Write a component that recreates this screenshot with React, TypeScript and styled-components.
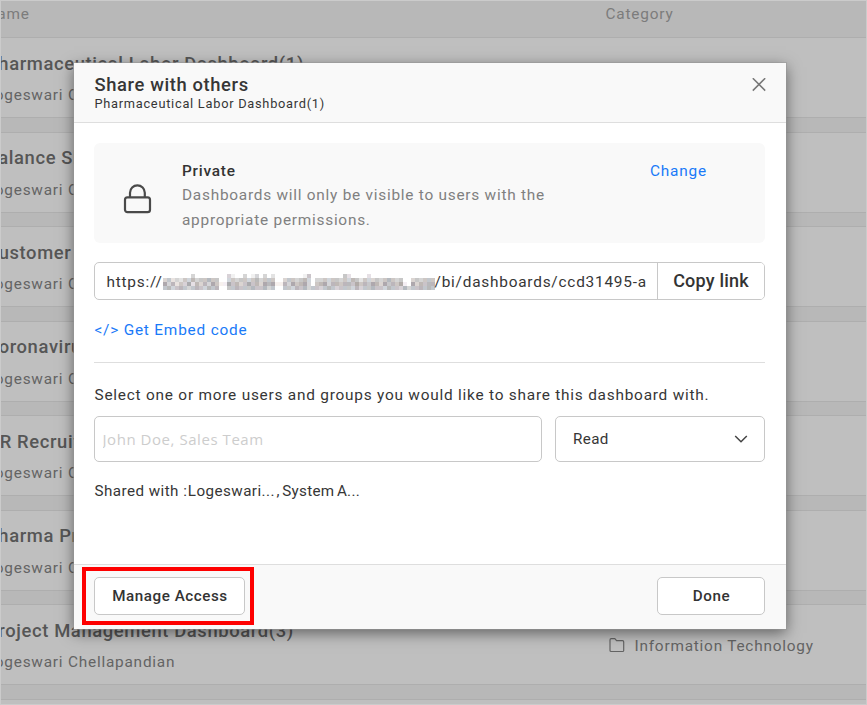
import React from 'react';
import styled, { createGlobalStyle } from 'styled-components';

const Global = createGlobalStyle`
  * { box-sizing: border-box; }
  body { margin: 0; font-family: Roboto, sans-serif; color: #363636; overflow: hidden; }
  button, input { font-family: inherit; }
`;

const Page = styled.div`
  position: relative;
  width: 867px;
  height: 705px;
  overflow: hidden;
  background: #b8b8b8;
  border: 1px solid #cbcbcb;
`;

const ListHeader = styled.div`
  display: flex;
  height: 36.4px;
  padding-top: 3px;
  font-size: 15.4px;
  line-height: 20px;
  letter-spacing: 0.8px;
  color: #7c7c7c;
`;

const NameCell = styled.div`
  width: 604.5px;
  flex: none;
  white-space: nowrap;
`;

const Clipped = styled.div<{ $shift: number }>`
  margin-left: ${(p) => -p.$shift}px;
`;

const Rows = styled.div`
  display: flex;
  flex-direction: column;
  gap: 13.5px;
`;

const Row = styled.div`
  display: flex;
  flex: none;
  height: 81px;
  border-top: 1px solid #aeaeae;
  border-bottom: 1px solid #aeaeae;
  background: #bfbfbf;
`;

const RowTitle = styled(Clipped)`
  padding-top: 13.2px;
  font-size: 18.4px;
  font-weight: 500;
  line-height: 24px;
  letter-spacing: 0.62px;
  color: #565656;
`;

const RowOwner = styled(Clipped)`
  padding-top: 9.8px;
  font-size: 15.4px;
  line-height: 20px;
  letter-spacing: 0.77px;
  color: #646464;
`;

const Category = styled.div`
  display: flex;
  align-items: center;
  gap: 9px;
  padding: 2px 0 0 3px;
  font-size: 15.4px;
  letter-spacing: 0.77px;
  color: #646464;
`;

const Dialog = styled.div`
  position: absolute;
  left: 73px;
  top: 62px;
  width: 712px;
  height: 566px;
  display: flex;
  flex-direction: column;
  background: #fff;
  box-shadow: 0 0 0 1px rgba(150, 150, 150, 0.5), 0 4px 14px rgba(0, 0, 0, 0.5);
`;

const DialogHeader = styled.header`
  display: flex;
  justify-content: space-between;
  height: 60px;
  padding: 10px 20px 0 20.4px;
  background: #f9f9f9;
  border-bottom: 1px solid #dedede;
`;

const Title = styled.h1`
  margin: 0;
  font-size: 18.4px;
  font-weight: 500;
  line-height: 23px;
  letter-spacing: 0.62px;
`;

const Subtitle = styled.div`
  font-size: 12.8px;
  line-height: 15px;
  letter-spacing: 0.74px;
`;

const CloseButton = styled.button`
  height: 14px;
  margin-top: 5px;
  padding: 0;
  border: 0;
  background: none;
  svg { display: block; }
`;

const Body = styled.div`
  flex: 1;
  padding: 20px 21px 0 20px;
`;

const AccessCard = styled.section`
  display: flex;
  height: 100px;
  padding-top: 15px;
  border-radius: 6px;
  background: #f9f9f9;
  font-size: 15.4px;
  line-height: 25px;
  letter-spacing: 0.77px;
`;

const LockSlot = styled.div`
  width: 88px;
  padding: 25px 0 0 29px;
  svg { display: block; }
`;

const AccessText = styled.div`
  width: 468px;
  color: #808080;
`;

const AccessName = styled.div`
  padding-top: 1px;
  line-height: 24px;
  font-weight: 500;
  color: #333;
`;

const Description = styled.div`
  width: 390px;
  letter-spacing: 0.75px;
`;

const Link = styled.a`
  color: #1a7af8;
  font-size: 15.4px;
  letter-spacing: 0.8px;
`;

const ChangeLink = styled(Link)`
  margin-top: 1px;
`;

const LinkBox = styled.div`
  display: flex;
  height: 38px;
  margin-top: 19px;
  border: 1px solid #c8c8c8;
  border-radius: 5px;
  overflow: hidden;
`;

const Url = styled.div`
  display: flex;
  align-items: center;
  width: 562px;
  padding: 1px 0 0 11.5px;
  font-size: 15.4px;
  letter-spacing: 0.77px;
  white-space: nowrap;
  svg { flex: none; }
`;

const CopyButton = styled.button`
  flex: 1;
  padding: 0 0 1px;
  border: 0;
  border-left: 1px solid #c8c8c8;
  background: #fff;
  color: #333;
  font-size: 18px;
  font-weight: 500;
  letter-spacing: 0.2px;
`;

const EmbedRow = styled.div`
  display: flex;
  align-items: center;
  gap: 4.5px;
  height: 63px;
  padding: 0 0 3px 0.5px;
  border-bottom: 1px solid #dedede;
`;

const Prompt = styled.div`
  margin: 21px 0 0 0.5px;
  font-size: 15.4px;
  line-height: 22px;
  letter-spacing: 0.77px;
  white-space: nowrap;
`;

const Fields = styled.div`
  display: flex;
  gap: 13px;
  margin-top: 10px;
`;

const UserInput = styled.input`
  width: 448px;
  height: 46px;
  padding: 0 7.5px;
  border: 1px solid #c8c8c8;
  border-radius: 5px;
  font-family: 'Open Sans', 'Noto Sans', sans-serif;
  font-size: 15px;
  letter-spacing: 0.55px;
  outline: none;
  &::placeholder { color: #cdcdcd; opacity: 1; }
`;

const Select = styled.div`
  display: flex;
  align-items: center;
  justify-content: space-between;
  flex: 1;
  padding: 0 16px 0 17px;
  border: 1px solid #c8c8c8;
  border-radius: 5px;
  font-size: 15.2px;
  letter-spacing: 0.4px;
`;

const Shared = styled.div`
  display: flex;
  margin: 18px 0 0 0.5px;
  font-size: 15.2px;
  line-height: 22px;
  letter-spacing: 0.45px;
  white-space: nowrap;
`;

const SharedName = styled.span<{ $gap: number }>`
  margin-left: ${(p) => p.$gap}px;
`;

const SystemName = styled(SharedName)`
  letter-spacing: 0.3px;
  word-spacing: -1.6px;
`;

const Footer = styled.footer`
  display: flex;
  justify-content: space-between;
  height: 65px;
  padding: 12px 21px 0 20px;
  background: #f9f9f9;
  border-top: 1px solid #dedede;
`;

const Button = styled.button<{ $width: number }>`
  width: ${(p) => p.$width}px;
  height: 38px;
  padding: 0 0 0 1px;
  border: 1px solid #c8c8c8;
  border-radius: 5px;
  background: #fff;
  color: #333;
  font-size: 15.2px;
  font-weight: 500;
  letter-spacing: 0.55px;
`;

const Highlight = styled.div`
  position: absolute;
  left: 8px;
  bottom: 4px;
  width: 172px;
  height: 58px;
  border: 4px solid #fe0000;
  pointer-events: none;
`;

const LockIcon = () => (
  <svg width="29" height="31" viewBox="0 0 29 31" fill="none" stroke="#4a4a4a" strokeWidth="2.2">
    <rect x="2" y="14.4" width="25" height="14.8" rx="2.4" />
    <path d="M7 14.4V9.8a7.4 7.4 0 0 1 14.8 0V14.4" />
  </svg>
);

const FolderIcon = () => (
  <svg width="17" height="15" viewBox="0 0 17 15" fill="none" stroke="#646464" strokeWidth="1.2">
    <path d="M1 12.5v-10.6q0-1.2 1.2-1.2h3.6l1.8 2h5.9q1.2 0 1.2 1.2v8.5q0 1.1-1.2 1.1H2.2q-1.2 0-1.2-1z" />
  </svg>
);

// Darkness of every tile of the obscured host name, one string per tile row.
const mosaicRows = [
  '00000003000000003100301303020000000140000000042000020000000000000000',
  '34232435344544003434434534440034434530334344343542433434543400343444',
  '63524362535364116453464536561153645630456355455464546536454610635455',
  '45345434543545004454445445340044354534434543444353445443544353445454',
];
const tints = [[0, 0, 0], [-5, 0, 6], [6, 0, -3], [0, 0, 3], [3, -3, 2]];

const HostMosaic = () => (
  <svg width="272" height="20" viewBox="0 0 272 20" shapeRendering="crispEdges">
    {mosaicRows.flatMap((line, y) =>
      [...line].map((c, x) => {
        const d = Number(c);
        if (!d) return null;
        const t = tints[(x * 3 + y * 7 + ((x * x) % 5)) % tints.length];
        const v = 255 - d * 14;
        return (
          <rect
            key={`${x}-${y}`}
            x={x * 4}
            y={2 + y * 4}
            width={4}
            height={4}
            fill={`rgb(${v + t[0]},${v + t[1]},${v + t[2]})`}
          />
        );
      }),
    )}
  </svg>
);

const rows = [
  { title: 'Pharmaceutical Labor Dashboard(1)', shift: 15 },
  { title: 'Balance Sheet', shift: 15 },
  { title: 'Customer Churn', shift: 15 },
  { title: 'Coronavirus Cases', shift: 15 },
  { title: 'HR Recruitment', shift: 15 },
  { title: 'Pharma Production', shift: 15 },
  { title: 'Project Management Dashboard(3)', shift: 15, category: 'Information Technology' },
  { title: '', shift: 15 },
];

export default function App() {
  return (
    <>
      <Global />
      <Page>
        <ListHeader>
          <NameCell><Clipped $shift={15.5}>Name</Clipped></NameCell>
          <div>Category</div>
        </ListHeader>
        <Rows>
          {rows.map((r, i) => (
            <Row key={i}>
              <NameCell>
                <RowTitle $shift={r.shift}>{r.title}</RowTitle>
                <RowOwner $shift={15.3}>Logeswari Chellapandian</RowOwner>
              </NameCell>
              {r.category && <Category><FolderIcon />{r.category}</Category>}
            </Row>
          ))}
        </Rows>
        <Dialog role="dialog">
          <DialogHeader>
            <div>
              <Title>Share with others</Title>
              <Subtitle>Pharmaceutical Labor Dashboard(1)</Subtitle>
            </div>
            <CloseButton aria-label="Close">
              <svg width="14" height="14" viewBox="0 0 14 14" stroke="#777" strokeWidth="1.5">
                <path d="M.8.2l12.4 12.4M13.2.2L.8 12.6" />
              </svg>
            </CloseButton>
          </DialogHeader>
          <Body>
            <AccessCard>
              <LockSlot><LockIcon /></LockSlot>
              <AccessText>
                <AccessName>Private</AccessName>
                <Description>Dashboards will only be visible to users with the appropriate permissions.</Description>
              </AccessText>
              <ChangeLink>Change</ChangeLink>
            </AccessCard>
            <LinkBox>
              <Url>
                <span>https://</span>
                <HostMosaic />
                <span>/bi/dashboards/ccd31495-a</span>
              </Url>
              <CopyButton>Copy link</CopyButton>
            </LinkBox>
            <EmbedRow>
              <Link>&lt;/&gt;</Link>
              <Link>Get Embed code</Link>
            </EmbedRow>
            <Prompt>Select one or more users and groups you would like to share this dashboard with.</Prompt>
            <Fields>
              <UserInput placeholder="John Doe, Sales Team" />
              <Select>
                Read
                <svg width="14" height="8" viewBox="0 0 14 8" fill="none" stroke="#444" strokeWidth="1.5">
                  <path d="M1.2 1l5.8 5.8L12.8 1" />
                </svg>
              </Select>
            </Fields>
            <Shared>
              Shared with :
              <SharedName $gap={0.5}>Logeswari...</SharedName>
              <SystemName $gap={1.5}>, System A...</SystemName>
            </Shared>
          </Body>
          <Footer>
            <Button $width={151}>Manage Access</Button>
            <Button $width={108}>Done</Button>
          </Footer>
          <Highlight />
        </Dialog>
      </Page>
    </>
  );
}
